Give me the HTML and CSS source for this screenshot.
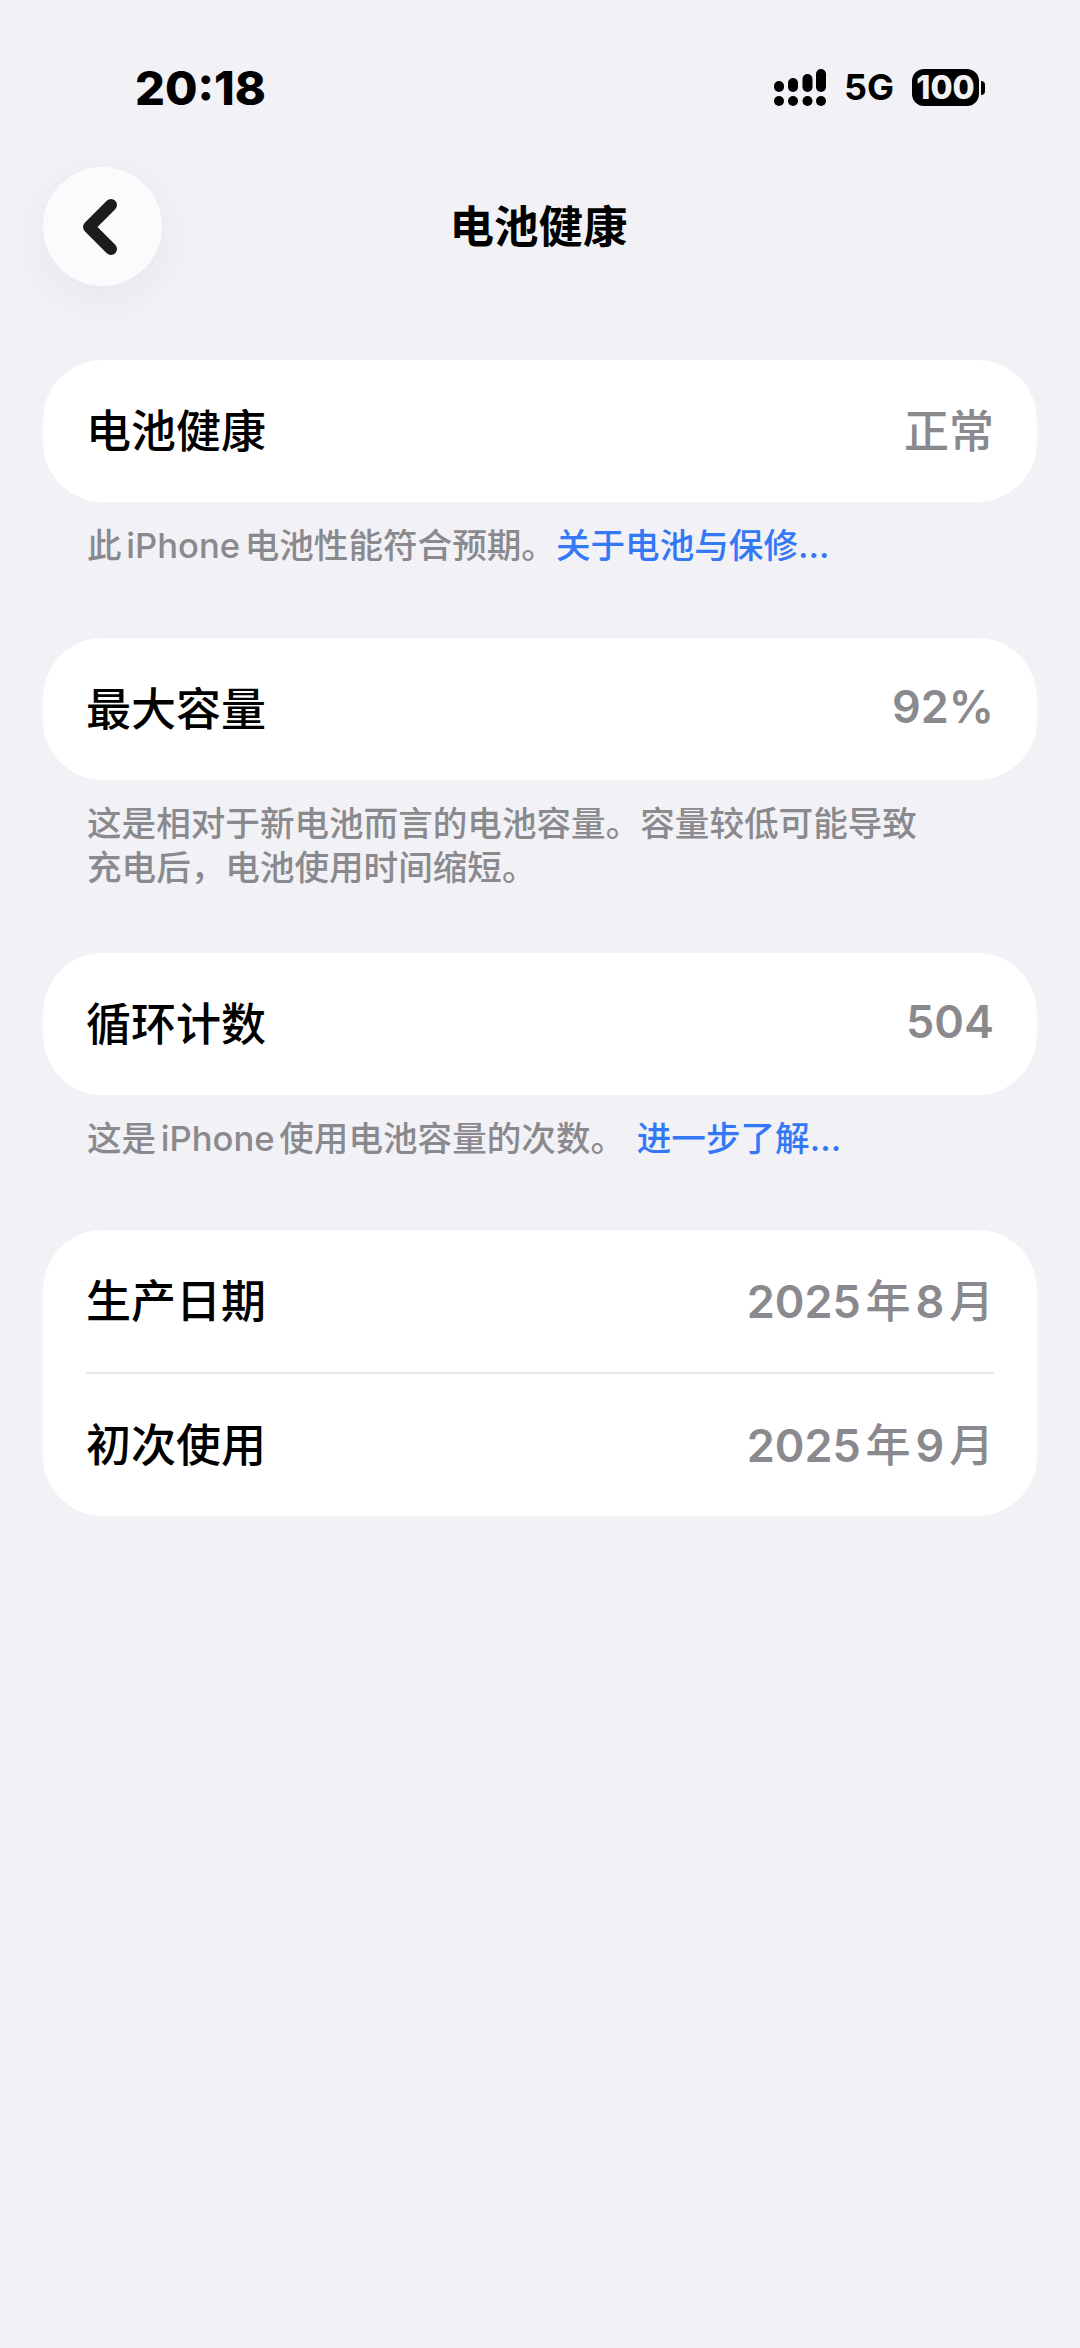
FILE: index.html

```html
<!DOCTYPE html>
<html lang="zh-CN">
<head>
  <meta charset="UTF-8">
  <title>电池健康</title>
  <link rel="stylesheet" href="styles.css">
</head>
<body>
  <div class="status-bar">
    <span class="time">20:18</span>
    <div class="status-icons">
      <svg class="signal" width="52" height="37" viewBox="0 0 52 37">
        <rect x="0" y="12" width="10" height="11" rx="5"/>
        <rect x="14" y="9" width="10" height="14" rx="5"/>
        <rect x="28.5" y="5" width="10" height="18" rx="5"/>
        <rect x="42" y="0" width="10" height="23" rx="5"/>
        <circle cx="5" cy="32" r="5"/>
        <circle cx="19" cy="32" r="5"/>
        <circle cx="33.5" cy="32" r="5"/>
        <circle cx="47" cy="32" r="5"/>
      </svg>
      <span class="network">5G</span>
      <div class="battery">
        <span class="battery-level">100</span>
        <span class="battery-tip"></span>
      </div>
    </div>
  </div>

  <header class="nav">
    <button class="back-btn" aria-label="返回">
      <svg width="44" height="64" viewBox="0 0 44 64">
        <path d="M33 10 L11 32 L33 54" fill="none" stroke="#1c1c1e" stroke-width="12" stroke-linecap="round" stroke-linejoin="round"/>
      </svg>
    </button>
    <h1 class="title">电池健康</h1>
  </header>

  <main class="content">
    <section class="group">
      <div class="card">
        <div class="row"><span class="label">电池健康</span><span class="value">正常</span></div>
      </div>
      <p class="note">此 iPhone 电池性能符合预期。<a class="link">关于电池与保修...</a></p>
    </section>

    <section class="group group-tight">
      <div class="card">
        <div class="row"><span class="label">最大容量</span><span class="value"><span class="num">92%</span></span></div>
      </div>
      <p class="note">这是相对于新电池而言的电池容量。容量较低可能导致<br>充电后，电池使用时间缩短。</p>
    </section>

    <section class="group">
      <div class="card">
        <div class="row"><span class="label">循环计数</span><span class="value"><span class="num">504</span></span></div>
      </div>
      <p class="note">这是 iPhone 使用电池容量的次数。 <a class="link link-gap">进一步了解...</a></p>
    </section>

    <section class="group">
      <div class="card">
        <div class="row"><span class="label">生产日期</span><span class="value"><span class="num">2025</span> 年 <span class="num">8</span> 月</span></div>
        <div class="divider"></div>
        <div class="row"><span class="label">初次使用</span><span class="value"><span class="num">2025</span> 年 <span class="num">9</span> 月</span></div>
      </div>
    </section>
  </main>
</body>
</html>
```

FILE: styles.css

```css
* { box-sizing: border-box; }

body {
  margin: 0;
  min-height: 2348px;
  background: #f1f1f6;
  color: #000;
  font-family: Inter, "Noto Sans CJK SC", sans-serif;
}

.status-bar {
  display: flex;
  justify-content: space-between;
  align-items: center;
  height: 37px;
  margin-top: 69px;
  padding: 0 95px 0 135px;
}
.time {
  font-size: 47px;
  font-weight: 800;
  line-height: 37px;
}
.status-icons {
  display: flex;
  align-items: center;
}
.signal { display: block; fill: #000; }
.network {
  margin-left: 18px;
  font-size: 36px;
  font-weight: 700;
  line-height: 37px;
}
.battery {
  display: flex;
  align-items: center;
  margin-left: 18px;
}
.battery-level {
  width: 67px;
  height: 37px;
  border-radius: 12px;
  background: #000;
  color: #f1f1f6;
  font-size: 32px;
  font-weight: 800;
  line-height: 37px;
  text-align: center;
}
.battery-tip {
  width: 4px;
  height: 14px;
  margin-left: 2px;
  border-radius: 0 4px 4px 0;
  background: #000;
}

.nav {
  display: grid;
  grid-template-columns: 119px 1fr 119px;
  align-items: center;
  height: 119px;
  margin: 61px 43px 0;
}
.back-btn {
  display: flex;
  align-items: center;
  justify-content: center;
  width: 119px;
  height: 119px;
  padding: 0 6px 0 0;
  border: none;
  border-radius: 50%;
  background: #fbfbfd;
  box-shadow: 0 12px 50px rgba(0, 0, 0, 0.05);
}
.title {
  grid-column: 2;
  margin: 0;
  padding-right: 3px;
  font-size: 44.5px;
  font-weight: 700;
  line-height: 60px;
  text-align: center;
}

.content { margin: 74px 43px 0; }

.group { margin-bottom: 71px; }
.group-tight { margin-bottom: 64px; }
.group-tight + .group { margin-bottom: 70px; }

.card {
  border-radius: 60px;
  background: #fff;
  overflow: hidden;
}
.row {
  display: flex;
  justify-content: space-between;
  align-items: center;
  height: 142px;
  padding: 0 43px 5px;
  font-size: 45px;
  font-weight: 500;
}
.value {
  color: #8a8a8e;
  word-spacing: -7.2px;
}
.num { font-weight: 600; }
.divider {
  height: 2px;
  margin: 0 43px;
  background: #e5e5ea;
}

.note {
  margin: 21px 44px 0;
  color: #8a8a8e;
  font-size: 34.6px;
  font-weight: 500;
  line-height: 44px;
  word-spacing: -4.5px;
}
.link { color: #3478f6; }
.link-gap { margin-left: 7px; }
```
